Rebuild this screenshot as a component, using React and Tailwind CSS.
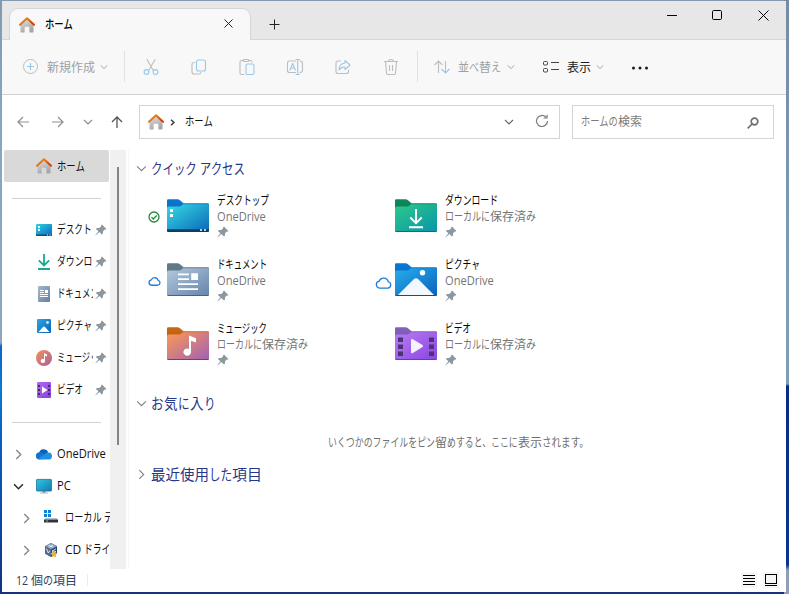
import React, { useLayoutEffect, useRef, useState } from "react";

/* A run of text fitted horizontally into a given advance width. */
function Run({ text, width }) {
  const ref = useRef(null);
  const [scale, setScale] = useState(1);
  useLayoutEffect(() => {
    const natural = ref.current.offsetWidth;
    if (natural) setScale(width / natural);
  }, [text, width]);
  return (
    <span className="inline-block shrink-0 whitespace-pre" style={{ width }}>
      <span ref={ref} className="inline-block origin-left whitespace-pre" style={{ transform: `scaleX(${scale})` }}>
        {text}
      </span>
    </span>
  );
}

function T({ runs, className = "" }) {
  return (
    <span className={"flex whitespace-pre " + className}>
      {runs.map(([t, w], i) => (
        <Run key={i} text={t} width={w} />
      ))}
    </span>
  );
}

function Chevron({ dir = "down", className = "", w = 8, sw = 1 }) {
  const d = dir === "down" ? "M1 3 L5 7 L9 3" : "M3 1 L7 5 L3 9";
  return (
    <svg width={w} height={w} viewBox="0 0 10 10" fill="none" stroke="currentColor" strokeWidth={(sw * 10) / w} className={"shrink-0 " + className}>
      <path d={d} />
    </svg>
  );
}

function HomeIcon() {
  return (
    <svg width="16" height="16" viewBox="0 0 16 16" className="shrink-0">
      <defs>
        <linearGradient id="hb" x1="0" y1="0" x2="0.4" y2="1">
          <stop offset="0" stopColor="#e2e2e2" />
          <stop offset="1" stopColor="#a6a6a6" />
        </linearGradient>
        <linearGradient id="hr" x1="0" y1="0" x2="1" y2="0.6">
          <stop offset="0" stopColor="#f6a01c" />
          <stop offset="1" stopColor="#d1420b" />
        </linearGradient>
      </defs>
      <path d="M1.5 7.500 8 1.800l6.500 5.700v7.200q0 .9-.9.9h-3.200v-4.500q0-1.300-1.200-1.300H6.800q-1.200 0-1.200 1.300v4.500H2.400q-.9 0-.9-.9z" fill="url(#hb)" />
      <path d="M1 7.700 8 1.300l7 6.400" fill="none" stroke="url(#hr)" strokeWidth="2.100" strokeLinecap="round" strokeLinejoin="round" />
    </svg>
  );
}

function Pin() {
  return (
    <svg width="12" height="12" viewBox="0 0 12 12" className="shrink-0">
      <path d="M7 .6 11.4 5l-1 .8-.8-.2-1.700 1.800.1 2.200-1 1-2.600-2.500L.8 11.300l-.4-.4 3-3.600L.9 4.900l1-1 2.400.1L6.200 2.300 6 1.500z" fill="#8b98a0" />
    </svg>
  );
}

const folderColors = {
  desktop: ["#0f6cbd", "#0a75cf", "#35dbe4", "#0b66b8", "#0a4c85"],
  download: ["#05754f", "#0d8a5c", "#2fc98b", "#0795a8", "#08707c"],
  document: ["#5b7480", "#607a88", "#b3c8de", "#6585ab", "#4a6380"],
  picture: ["#0b6ac8", "#0a76d4", "#27aeea", "#0a62bd", "#0a4f9c"],
  music: ["#b75a10", "#c9680f", "#fd9a55", "#a060b4", "#7d3f5a"],
  video: ["#7651ac", "#8560bd", "#b87cf5", "#8a45e0", "#6b3bae"],
};

function Folder({ kind }) {
  const [tab1, tab2, a, b, edge] = folderColors[kind];
  const id = "f-" + kind;
  return (
    <svg width="42" height="34" viewBox="0 0 42 34" className="shrink-0">
      <defs>
        <linearGradient id={id} x1="0" y1="0" x2="1" y2="1">
          <stop offset="0" stopColor={a} />
          <stop offset="1" stopColor={b} />
        </linearGradient>
        <linearGradient id={id + "t"} x1="0" y1="0" x2="0" y2="1">
          <stop offset="0" stopColor={tab2} />
          <stop offset="1" stopColor={tab1} />
        </linearGradient>
      </defs>
      <path d="M0 1.500Q0 .3 1.200 .3H10.500Q12 .3 13 1.200L16.500 4.300H40.800Q42 4.300 42 5.500V20H0z" fill={`url(#${id}t)`} />
      <path d="M0 9Q0 7.500 1.500 7.500H12Q13.500 7.500 14.500 6.500L16 5.200H40.800Q42 5.200 42 6.400V31.500Q42 32.900 40.600 32.900H1.400Q0 32.900 0 31.500z" fill={`url(#${id})`} />
      <path d="M0 30.900v.6Q0 32.900 1.400 32.900H40.600Q42 32.900 42 31.500v-.6Q42 31.900 40.600 31.900H1.400Q0 31.900 0 30.900z" fill={edge} />
      {kind === "desktop" && (
        <g>
          <path d="M0 30.200h42v1.300q0 1.400-1.400 1.400H1.400Q0 32.900 0 31.500z" fill="#0b3f6b" />
          <path d="M3 10h3v3H3zM3 15h3v3H3zM33 30.200h2v1.500h-2zM37 30.200h2v1.500h-2z" fill="#fff" />
        </g>
      )}
      {kind === "download" && <path d="M21 10v14M15.300 18.500l5.700 5.700 5.700-5.700M14 28.200h14" fill="none" stroke="#fff" strokeWidth="1.900" />}
      {kind === "document" && <path d="M11 10.500h11v1.700H11zM11 15.300h11v1.700H11zM11 20.200h20v1.700H11zM11 25.300h20v1.700H11zM24.200 10.200h6.800v6.800h-6.800z" fill="#fff" />}
      {kind === "picture" && (
        <g>
          <path d="M3 32 18.500 16.500Q21 14 23.500 16.500L39 32z" fill="#f2f8ff" />
          <circle cx="27.500" cy="9.800" r="2.700" fill="#fff" />
        </g>
      )}
      {kind === "music" && <path d="M22 8.500l7 2.800v4.200l-5-1.800V25a3.800 3.600 0 1 1-2-3z" fill="#fff" />}
      {kind === "video" && (
        <g>
          <path d="M3 10.500h5v4.500H3zM3 17.500h5v4.500H3zM3 24.500h5v4.500H3zM34 10.500h5v4.500h-5zM34 17.500h5v4.500h-5zM34 24.500h5v4.500h-5z" fill="#4a3570" />
          <path d="M16 13.300q0-2 1.800-1L27.500 18q1.400.9 0 1.900l-9.700 6q-1.800 1-1.800-1z" fill="#f6f2fb" />
        </g>
      )}
    </svg>
  );
}

function Cloud({ w, h }) {
  return (
    <svg width={w} height={h} viewBox="0 0 16 12" fill="#fff" stroke="#1a7fd8" strokeWidth={w > 14 ? 1.2 : 1.600} className="shrink-0">
      <path d="M4 11.200H12a3 3 0 0 0 .5-5.900A4.500 4.500 0 0 0 4 4.700 3.300 3.300 0 0 0 4 11.200z" />
    </svg>
  );
}

function SideIcon({ kind }) {
  const box = "shrink-0";
  if (kind === "desktop")
    return (
      <svg width="16" height="16" className={box}>
        <defs><linearGradient id="sd" x1="0" y1="0" x2="1" y2="1"><stop stopColor="#31d1e1" /><stop offset="1" stopColor="#0868bd" /></linearGradient></defs>
        <rect y="2" width="16" height="12" rx="1" fill="url(#sd)" />
        <path d="M0 12.500h16V13q0 1-1 1H1q-1 0-1-1z" fill="#0c4c80" />
        <path d="M2 4h2v2H2zM2 7h2v2H2zM11 12.500h1v1h-1zM13.500 12.500h1v1h-1z" fill="#fff" />
      </svg>
    );
  if (kind === "download")
    return (
      <svg width="16" height="16" className={box} fill="none" stroke="#18ab8c" strokeWidth="1.800">
        <path d="M8 0v11M2.800 6.300 8 11.500l5.200-5.200M2 15h12" />
      </svg>
    );
  if (kind === "document")
    return (
      <svg width="16" height="16" className={box}>
        <defs><linearGradient id="sdo" x1="0" y1="0" x2="1" y2="1"><stop stopColor="#a4b9cf" /><stop offset="1" stopColor="#64809e" /></linearGradient></defs>
        <rect x="2" width="12" height="16" rx="1" fill="url(#sdo)" />
        <path d="M4 4h4v1H4zM4 6h4v1H4zM9 4h3v3H9zM4 8h8v1H4zM4 10h8v1H4z" fill="#fff" />
      </svg>
    );
  if (kind === "picture")
    return (
      <svg width="16" height="16" className={box}>
        <defs><linearGradient id="sp" x1="0" y1="0" x2="1" y2="1"><stop stopColor="#2ba8e8" /><stop offset="1" stopColor="#0862b9" /></linearGradient></defs>
        <rect x="1" y="1" width="14" height="14" rx="1" fill="url(#sp)" />
        <path d="M2.500 14 7 9q1-1 2 0l4.500 5z" fill="#fff" />
        <circle cx="11.500" cy="4.500" r="1.300" fill="#fff" />
      </svg>
    );
  if (kind === "music")
    return (
      <svg width="16" height="16" className={box}>
        <defs><linearGradient id="sm" x1="0" y1="0" x2="1" y2="1"><stop stopColor="#f0925c" /><stop offset="1" stopColor="#a95f99" /></linearGradient></defs>
        <circle cx="8" cy="8" r="8" fill="url(#sm)" />
        <path d="M8 3l3 1.600v2L9 5.600V11a2.100 2 0 1 1-1-1.700z" fill="#fff" />
      </svg>
    );
  if (kind === "video")
    return (
      <svg width="16" height="16" className={box}>
        <defs><linearGradient id="sv" x1="0" y1="0" x2="1" y2="1"><stop stopColor="#b16bf2" /><stop offset="1" stopColor="#8442dc" /></linearGradient></defs>
        <rect x="1" width="14" height="16" rx="1" fill="url(#sv)" />
        <path d="M2 3h2v2H2zM2 7h2v2H2zM2 11h2v2H2zM12 3h2v2h-2zM12 7h2v2h-2zM12 11h2v2h-2z" fill="#49276f" />
        <path d="M6 4.500 11.500 8 6 11.500z" fill="#fff" />
      </svg>
    );
  if (kind === "onedrive")
    return (
      <svg width="16" height="16" className={box}>
        <path d="M3 7A5 5 0 0 1 12.300 6L8 10z" fill="#0a62b8" />
        <path d="M3.500 13.500A3.500 3.500 0 0 1 3.500 6.300Q5.500 6 7 7.200L12 12z" fill="#1173cc" />
        <path d="M1.500 12.700 10.500 7Q15.200 5.300 16 9.800 16 13.500 13 13.500H3.500Q2.300 13.500 1.500 12.700z" fill="#1f8fe4" />
      </svg>
    );
  if (kind === "pc")
    return (
      <svg width="16" height="16" className={box}>
        <defs><linearGradient id="spc" x1="0" y1="0" x2="1" y2="1"><stop stopColor="#30c8dc" /><stop offset="1" stopColor="#1478b4" /></linearGradient></defs>
        <path d="M6.500 12h3v3h-3z" fill="#8d9ba5" />
        <path d="M4 14.500h8v1H4z" fill="#a9b4bb" />
        <rect x=".4" y="1.400" width="15.200" height="11.600" rx=".8" fill="url(#spc)" stroke="#1b6f9d" strokeWidth=".8" />
      </svg>
    );
  if (kind === "disk")
    return (
      <svg width="16" height="16" className={box}>
        <path d="M1 0h3v3H1zM5 0h3v3H5zM1 4h3v3H1zM5 4h3v3H5z" fill="#0a84d8" />
        <path d="M2.500 8h11L15 9.500H1z" fill="#b9bcbf" />
        <path d="M1 9.500h14v3H1z" fill="#303437" />
        <path d="M3 10.500h2v1H3z" fill="#62cf68" />
      </svg>
    );
  return (
    <svg width="16" height="16" className={box}>
      <path d="M8 1 14 4.300v7.200L8 15 2 11.500V4.300z" fill="#24446d" />
      <path d="M8 1 14 4.300 8 7.500 2 4.300z" fill="#8ba0b8" />
      <path d="M2 4.300 8 7.500V15L2 11.500z" fill="#506c8e" />
      <path d="M3.500 6.500 5.300 11 7 8.500M9.500 8.200v4l3.500-2.500-3-1 3-2M5.500 3.200l4.700 2M10 3.200 5.800 5.200" fill="none" stroke="#e8eef4" strokeWidth=".9" />
      <path d="m10.900 8.500 1.200 2.300 2.600.4-1.900 1.800.5 2.600-2.400-1.300-2.300 1.300.5-2.600-1.900-1.800 2.600-.4z" fill="#f4ae32" />
    </svg>
  );
}

const pinned = [
  ["desktop", [["デスクトップ", 52]]],
  ["download", [["ダウンロード", 53]]],
  ["document", [["ドキュメント", 50]]],
  ["picture", [["ピクチャ", 35]]],
  ["music", [["ミュージック", 50]]],
  ["video", [["ビデオ", 26]]],
];

const tree = [
  ["onedrive", "right", [["OneDrive", 49]], false],
  ["pc", "down", [["PC", 14]], false],
  ["disk", "right", [["ローカル ", 39], ["ディスク", 35]], true],
  ["cd", "right", [["CD ", 19], ["ドライブ", 35]], true],
];

function Sidebar() {
  return (
    <div className="flex h-[419px] w-[108px] shrink-0 flex-col overflow-hidden text-[12px] leading-[16px] text-[#111]">
      <div className="ml-[2px] flex h-[32px] w-[105px] shrink-0 items-center gap-[5px] rounded-[2px] bg-[#d9d9d9] pl-[32px]">
        <HomeIcon />
        <T className="pt-px" runs={[["ホーム", 28]]} />
      </div>
      <div className="flex h-[32px] shrink-0 items-center pl-[10px]"><div className="h-px w-[89px] bg-[#d2d2d2]" /></div>
      {pinned.map(([k, runs]) => (
        <div key={k} className="flex h-[32px] shrink-0 items-center pl-[34px]">
          <SideIcon kind={k} />
          <div className="ml-[5px] flex w-[36px] overflow-hidden"><T runs={runs} /></div>
          <div className="ml-[2px] flex"><Pin /></div>
        </div>
      ))}
      <div className="flex h-[32px] shrink-0 items-center pl-[10px]"><div className="h-px w-[89px] bg-[#d2d2d2]" /></div>
      {tree.map(([k, dir, runs, deep]) => (
        <div key={k} className={"flex h-[32px] shrink-0 items-center " + (deep ? "pl-[19px]" : "pl-[11px]")}>
          <Chevron dir={dir} w={11} sw={1.4} className={dir === "down" ? "text-[#222]" : "text-[#858585]"} />
          <div className={"flex " + (deep ? "ml-[11px]" : "ml-[12px]")}><SideIcon kind={k} /></div>
          <div className={"flex w-[55px] " + (deep ? "ml-[6px]" : "ml-[5px]")}><T runs={runs} /></div>
        </div>
      ))}
    </div>
  );
}

const local = [["ローカルに", 45], ["保存済", 36], ["み", 10]];
const one = [["OneDrive", 49]];

function Tile({ kind, name, sub, status }) {
  return (
    <div className="flex h-[64px] w-[228px] items-start">
      <div className="mt-[16px] flex h-[34px] w-[21px] shrink-0 items-center justify-end">
        {status === "ok" && (
          <svg width="12" height="12" viewBox="0 0 12 12" fill="none" stroke="#21893b" strokeWidth="1.300" className="mr-[4px]">
            <circle cx="6" cy="6" r="5" /><path d="M3.500 6.200 5.300 8 8.700 4.500" />
          </svg>
        )}
        {status === "cloud" && <div className="mr-[3px]"><Cloud w={13} h={10} /></div>}
        {status === "big" && <div className="mt-[3px]"><Cloud w={17} h={13} /></div>}
      </div>
      <div className="ml-[3px] mt-[15px] flex"><Folder kind={kind} /></div>
      <div className="ml-[8px] mt-[9px] flex flex-col text-[12px] leading-[16px]">
        <T runs={name} className="text-[#050505]" />
        <T runs={sub} className="text-[#757575]" />
        <div className="mt-[1px] flex"><Pin /></div>
      </div>
    </div>
  );
}

function Heading({ dir, runs }) {
  return (
    <div className="flex h-[20px] items-center gap-[4px] pl-[7px] text-[14.5px] leading-[20px] text-[#26378a]">
      <Chevron dir={dir} w={11} sw={1.1} className="text-[#808080]" />
      <T className="pt-px" runs={runs} />
    </div>
  );
}

function Tool({ children }) {
  return (
    <svg width="18" height="18" viewBox="0 0 18 18" fill="none" strokeWidth="1.100" strokeLinecap="round" strokeLinejoin="round" className="mr-[30px] shrink-0">
      {children}
    </svg>
  );
}

const G = "#bdbdbd";
const B = "#98c8ec";

function Toolbar() {
  return (
    <div className="flex h-[55px] shrink-0 items-center border-b border-[#d2d2d2] bg-[#f8f8f8] pl-[20px] text-[12px] leading-[16px] text-[#a0a0a0]">
      <svg width="17" height="17" viewBox="0 0 17 17" fill="none" className="mb-[1px] shrink-0">
        <circle cx="8.500" cy="8.500" r="7" stroke={G} /><path d="M8.500 5v7M5 8.500h7" stroke={B} strokeWidth="1.200" />
      </svg>
      <T className="ml-[8px] pt-[2px]" runs={[["新規作成", 48]]} />
      <Chevron className="ml-[5px]" />
      <div className="mb-[1px] ml-[16px] mr-[17px] h-[31px] w-px shrink-0 bg-[#e2e2e2]" />
      <Tool>
        <path d="M5 1.500 11 12M13 1.500 7 12" stroke={G} />
        <circle cx="4.500" cy="14" r="2.400" stroke={B} /><circle cx="13.500" cy="14" r="2.400" stroke={B} />
      </Tool>
      <Tool>
        <path d="M4.500 4.500H4Q2 4.500 2 6.500v7.500q0 2 2 2h5q2 0 2-1.500" stroke={G} />
        <rect x="6.500" y="2" width="9" height="11" rx="2" stroke={B} />
      </Tool>
      <Tool>
        <path d="M5 2.500H3.500Q2 2.500 2 4v11q0 1.500 1.500 1.500H6M11 2.500h1.500Q14 2.500 14 4" stroke={G} />
        <rect x="5" y="1.500" width="6" height="2" rx="1" stroke={G} />
        <rect x="8" y="6" width="8" height="10.500" rx="1.500" stroke={B} />
      </Tool>
      <Tool>
        <path d="M9.500 3H3.500Q1.500 3 1.500 5v7.500q0 2 2 2h6M14 3Q16.500 3 16.500 5.500V12q0 2.500-2.500 2.500" stroke={G} />
        <path d="m4 12 2.700-6.500L9.400 12M5 10h3.500M11.700 1.500v15M10 1.500h3.500M10 16.500h3.500" stroke={B} />
      </Tool>
      <Tool>
        <path d="M6.500 3H4Q2 3 2 5v8.500q0 2 2 2h8.500q2 0 2-2V12" stroke={G} />
        <path d="M11 2.500 16 7l-5 4.500V9Q7 9 5 12q0-6 6-7z" stroke={B} />
      </Tool>
      <svg width="18" height="18" viewBox="0 0 18 18" fill="none" stroke={G} strokeWidth="1.100" className="shrink-0">
        <path d="M2 3.500h14M3.500 3.500 4.500 15q.1 1.500 1.500 1.500h6q1.400 0 1.500-1.500l1-11.500M6.500 3.500Q6.500 1.500 9 1.500t2.500 2M7.500 7v6M10.500 7v6" />
      </svg>
      <div className="mb-[1px] ml-[17px] mr-[16px] h-[31px] w-px shrink-0 bg-[#e2e2e2]" />
      <svg width="16" height="16" viewBox="0 0 16 16" fill="none" strokeWidth="1.100" className="shrink-0">
        <path d="M4.500 14V2M.5 6l4-4 4 4" stroke={G} /><path d="M11.500 2v12M7.500 10l4 4 4-4" stroke={B} />
      </svg>
      <T className="ml-[8px] pt-[2px]" runs={[["並", 11], ["べ", 10], ["替", 12], ["え", 10]]} />
      <Chevron className="ml-[6px]" />
      <svg width="17" height="14" viewBox="0 0 17 14" fill="none" stroke="#444" className="ml-[27px] shrink-0">
        <rect x="1.500" y="1.500" width="4" height="3.500" rx="1" /><rect x="1.500" y="8.500" width="4" height="3.500" rx="1" />
        <path d="M9 2.500h8M9 9.500h8" />
      </svg>
      <T className="ml-[8px] pt-[2px] text-[#1a1a1a]" runs={[["表示", 24]]} />
      <Chevron className="ml-[5px]" />
      <svg width="18" height="4" viewBox="0 0 18 4" className="ml-[27px] mt-[2px] shrink-0" fill="#1a1a1a">
        <circle cx="2.500" cy="2" r="1.500" /><circle cx="9" cy="2" r="1.500" /><circle cx="15.500" cy="2" r="1.500" />
      </svg>
    </div>
  );
}

function TitleBar() {
  return (
    <div className="flex h-[39px] shrink-0 items-end border-b border-[#d6d6d6] bg-[#e7e7e7]">
      <div className="-mb-px ml-[7px] flex h-[32px] w-[242px] items-center rounded-t-[9px] border border-b-0 border-[#d6d6d6] bg-[#f8f8f8] pl-[9px] text-[12px] leading-[16px] text-black">
        <HomeIcon />
        <T className="ml-[10px] font-medium" runs={[["ホーム", 28]]} />
        <svg width="9" height="9" viewBox="0 0 9 9" className="mb-[2px] ml-[151px] shrink-0" stroke="#222" fill="none"><path d="M.5.5l8 8M8.500.5l-8 8" /></svg>
      </div>
      <svg width="11" height="11" viewBox="0 0 11 11" className="mb-[9px] ml-[18px]" stroke="#222" fill="none"><path d="M5.500.5v10M.5 5.500h10" /></svg>
      <div className="mb-[18px] ml-[387px] flex items-center gap-[34px]">
        <svg width="11" height="11" className="shrink-0" stroke="#000"><path d="M0 5.500h10" /></svg>
        <svg width="11" height="11" className="shrink-0" fill="none" stroke="#000"><rect x=".5" y=".5" width="9" height="9" rx="1.200" /></svg>
        <svg width="11" height="11" className="ml-[1px] shrink-0" fill="none" stroke="#000"><path d="M.5.5l10 10M10.500.5l-10 10" /></svg>
      </div>
    </div>
  );
}

function NavBar() {
  return (
    <div className="flex h-[55px] shrink-0 items-start pt-[10px] text-[12px] leading-[16px]">
      <div className="flex h-[34px] w-[137px] shrink-0 items-center pl-[15px]">
        <svg width="12" height="12" fill="none" stroke="#8f8f8f" strokeWidth="1.200"><path d="M12 6H1M6 1 1 6l5 5" /></svg>
        <svg width="12" height="12" fill="none" stroke="#8f8f8f" strokeWidth="1.200" className="ml-[23px]"><path d="M0 6h11M6 1l5 5-5 5" /></svg>
        <Chevron w={10} sw={1.2} className="ml-[19px] text-[#8f8f8f]" />
        <svg width="12" height="12" fill="none" stroke="#555" strokeWidth="1.300" className="ml-[18px]"><path d="M6 12V1M1 6l5-5 5 5" /></svg>
      </div>
      <div className="flex h-[34px] w-[421px] shrink-0 items-center border border-[#d5d5d5] pl-[8px]">
        <HomeIcon />
        <Chevron dir="right" w={7} sw={1.6} className="ml-[5px] text-[#444]" />
        <T className="ml-[9px] text-[#111]" runs={[["ホーム", 28]]} />
        <Chevron w={10} sw={1.1} className="ml-[291px] text-[#666]" />
        <svg width="14" height="14" viewBox="0 0 14 14" fill="none" stroke="#777" strokeWidth="1.200" className="mb-[2px] ml-[21px] shrink-0">
          <path d="M12.500 7A5.500 5.500 0 1 1 10.800 3M12 .8V4H8.800" />
        </svg>
      </div>
      <div className="ml-[12px] flex h-[34px] w-[202px] shrink-0 items-center border border-[#d5d5d5] pl-[8px] text-[#7a7a7a]">
        <T runs={[["ホームの", 37], ["検索", 24]]} />
        <svg width="12" height="12" viewBox="0 0 12 12" fill="none" stroke="#707070" strokeWidth="1.700" className="ml-[105px] mt-[1px] shrink-0">
          <circle cx="7.500" cy="4.500" r="3.300" /><path d="M5 7 .7 11.300" />
        </svg>
      </div>
    </div>
  );
}

export default function App() {
  return (
    <div className="h-[594px] w-[789px] overflow-hidden bg-[linear-gradient(180deg,#8299ae_0px,#86a7c5_120px,#8fa6bc_343px,#1263c5_346px,#087bd6_390px,#0a62c2_430px,#0c49a3_520px,#12337b_594px)] font-['Open_Sans','Noto_Sans_CJK_JP',sans-serif]">
      <div className="flex h-full w-full bg-[linear-gradient(180deg,#758da3_0px,#7f9db8_300px,#7f9db8_384px,#0b2b83_386px,#0a358f_565px,#8f9eb2_570px,#8f9eb2_594px)] bg-[length:5px_100%] bg-right bg-no-repeat pl-[2px] pt-px">
        <div className="flex h-[591px] w-[784px] flex-col overflow-hidden bg-white">
          <TitleBar />
          <Toolbar />
          <NavBar />
          <div className="flex h-[419px] shrink-0">
            <Sidebar />
            <div className="h-full w-[16px] shrink-0 bg-[#f0f0f0] pl-[7px] pt-[17px]">
              <div className="h-[278px] w-[2px] bg-[#858585]" />
            </div>
            <div className="ml-[2px] w-px shrink-0 bg-[#f5f5f5]" />
            <div className="flex w-[655px] flex-col pt-[8px]">
              <Heading dir="down" runs={[["クイック アクセス", 94]]} />
              <div className="ml-[14px] mt-[6px] flex w-[456px] flex-wrap">
                <Tile kind="desktop" name={pinned[0][1]} sub={one} status="ok" />
                <Tile kind="download" name={pinned[1][1]} sub={local} />
                <Tile kind="document" name={pinned[2][1]} sub={one} status="cloud" />
                <Tile kind="picture" name={pinned[3][1]} sub={one} status="big" />
                <Tile kind="music" name={pinned[4][1]} sub={local} />
                <Tile kind="video" name={pinned[5][1]} sub={local} />
              </div>
              <div className="mt-[17px]"><Heading dir="down" runs={[["お", 13], ["気", 14], ["に", 12], ["入", 14], ["り", 12]]} /></div>
              <T className="ml-[199px] mt-[22px] text-[12px] leading-[16px] text-[#707070]" runs={[["いくつかのファイルをピン", 107], ["留", 12], ["めすると、ここに", 71], ["表示", 24], ["されます。", 47]]} />
              <div className="mt-[13px]"><Heading dir="right" runs={[["最近使用", 58], ["した", 23], ["項目", 30]]} /></div>
            </div>
          </div>
          <div className="flex h-[22px] shrink-0 items-center pl-[14px] text-[12px] leading-[16px] text-[#2b3f63]">
            <T className="pt-[2px]" runs={[["12 ", 15], ["個", 12], ["の", 10], ["項目", 24]]} />
            <div className="ml-[10px] h-[12px] w-px bg-[#ebebeb]" />
            <div className="ml-[653px] flex h-[16px] w-[16px] items-center justify-center bg-[#f6f6f6]">
              <svg width="12" height="10" stroke="#000"><path d="M0 .5h12M0 3.500h12M0 6.500h12M0 9.500h12" /></svg>
            </div>
            <div className="ml-[6px] flex h-[16px] w-[16px] items-center justify-center bg-[#f6f6f6]">
              <svg width="12" height="12" fill="none" stroke="#000"><rect x=".5" y=".5" width="11" height="9" /><path d="M0 11.500h12" /></svg>
            </div>
          </div>
        </div>
      </div>
    </div>
  );
}
